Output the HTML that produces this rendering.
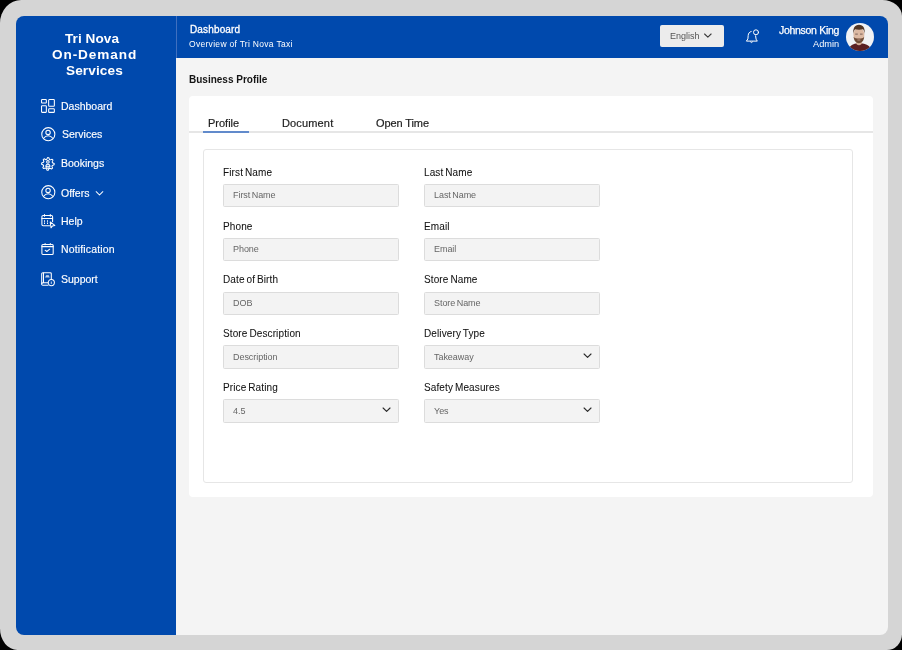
<!DOCTYPE html>
<html><head><meta charset="utf-8">
<style>
*{box-sizing:border-box;margin:0;padding:0}
html,body{width:902px;height:650px;overflow:hidden;background:#000;font-family:"Liberation Sans",sans-serif;position:relative}
div,svg{position:absolute}
.t{white-space:nowrap;line-height:1;will-change:transform}
.frame{left:0;top:0;width:902px;height:650px;background:#d5d5d5;border-radius:21.2px 19.6px 15.2px 17.4px / 23px 16.1px 15.7px 21.5px}
.content{left:176px;top:57px;width:711.8px;height:578.1px;background:#f4f4f4;border-bottom-right-radius:8px}
.side{left:15.9px;top:15.8px;width:160.1px;height:619.3px;background:#0049ad;border-top-left-radius:8px;border-bottom-left-radius:8px}
.head{left:176px;top:15.8px;width:711.8px;height:42.1px;background:#0049ad;border-top-right-radius:8px}
.sep{left:176px;top:15.8px;width:1px;height:42.1px;background:#3f6fbf}
.brand{color:#fff;font-weight:bold;font-size:13.6px}
.nav{color:#fff;font-size:10.5px;-webkit-text-stroke:0.15px #fff}
.lang{left:660px;top:25px;width:64px;height:22px;background:#ececec;border-radius:2px}
.avatar{left:846px;top:23px;width:28px;height:28px;border-radius:50%;overflow:hidden;background:#f1f2f4}
.card{left:189px;top:95.7px;width:684px;height:401.3px;background:#fff;border-radius:4px}
.tabline{left:189px;top:131.3px;width:684px;height:1.3px;background:#e6e6e6}
.tabul{left:203px;top:131px;width:46px;height:2px;background:#618acb}
.box{left:203px;top:149px;width:650px;height:334px;border:1px solid #e6e6e6;border-radius:3px}
.lbl{font-size:10px;letter-spacing:0.12px;word-spacing:-1px;color:#111;-webkit-text-stroke:0.05px #111}
.inp{width:176px;height:23px;background:#f3f3f3;border:1px solid #dcdcdc;border-radius:1.5px}
.ph{font-size:9px;letter-spacing:-0.05px;word-spacing:-1px;color:#666}
.tab{font-size:11px;color:#1e1e1e;-webkit-text-stroke:0.2px #1e1e1e}
</style></head><body>
<div class="frame"></div>
<div class="content"></div>
<div class="side"></div>
<div class="head"></div>
<div class="sep"></div>
<div class="t brand" style="top:31.79px;left:64.6px;letter-spacing:0.05px">Tri Nova</div>
<div class="t brand" style="top:48.29px;left:51.5px;letter-spacing:0.9px">On-Demand</div>
<div class="t brand" style="top:64.09px;left:65.6px;letter-spacing:0.12px">Services</div>
<svg width="17" height="16" viewBox="0 0 17 16" style="left:39px;top:98px"><g stroke="#fff" fill="none" stroke-width="1.05" stroke-linecap="round" stroke-linejoin="round" stroke-width="0.95"><rect x="2.55" y="1.55" width="4.8" height="3.5" rx="0.6"/><rect x="2.55" y="7.65" width="4.8" height="6.7" rx="0.6"/><rect x="9.65" y="1.55" width="5.7" height="6.6" rx="0.7"/><rect x="9.65" y="10.75" width="5.7" height="3.6" rx="0.7"/></g></svg>
<div class="t nav" style="left:61px;top:101.11px;">Dashboard</div>
<svg width="17" height="17" viewBox="0 0 17 17" style="left:39.5px;top:126.1px"><g stroke="#fff" fill="none" stroke-width="1.05" stroke-linecap="round" stroke-linejoin="round" stroke-width="0.95"><circle cx="8.3" cy="8.15" r="6.55"/><circle cx="8.05" cy="6.4" r="2.2"/><path d="M3.6 12.2 C5 10.4 6.6 9.7 8.2 9.7 C9.8 9.7 11.4 10.4 12.8 12.2"/></g></svg>
<div class="t nav" style="left:62px;top:129.11px;">Services</div>
<svg width="16" height="16" viewBox="0 0 16 16" style="left:39.7px;top:155.6px"><g stroke="#fff" fill="none" stroke-width="1.05" stroke-linecap="round" stroke-linejoin="round" stroke-width="0.95"><path d="M7.59 1.61 L8.82 1.67 L9.48 3.47 L10.32 3.87 L12.13 3.23 L12.96 4.15 L12.15 5.89 L12.46 6.76 L14.19 7.59 L14.13 8.82 L12.33 9.48 L11.93 10.32 L12.57 12.13 L11.65 12.96 L9.91 12.15 L9.04 12.46 L8.21 14.19 L6.98 14.13 L6.32 12.33 L5.48 11.93 L3.67 12.57 L2.84 11.65 L3.65 9.91 L3.34 9.04 L1.61 8.21 L1.67 6.98 L3.47 6.32 L3.87 5.48 L3.23 3.67 L4.15 2.84 L5.89 3.65 L6.76 3.34 Z"/><circle cx="7.9" cy="5.9" r="1.3"/><path d="M5.7 10.2 C6 8.9 6.8 8.3 7.9 8.3 C9 8.3 9.8 8.9 10.1 10.2 Z M6.5 10.2 L7 12.3 H8.8 L9.3 10.2"/></g></svg>
<div class="t nav" style="left:61px;top:158.41px;">Bookings</div>
<svg width="17" height="17" viewBox="0 0 17 17" style="left:39.5px;top:184.2px"><g stroke="#fff" fill="none" stroke-width="1.05" stroke-linecap="round" stroke-linejoin="round" stroke-width="0.95"><circle cx="8.3" cy="8.15" r="6.55"/><circle cx="8.05" cy="6.4" r="2.2"/><path d="M3.6 12.2 C5 10.4 6.6 9.7 8.2 9.7 C9.8 9.7 11.4 10.4 12.8 12.2"/></g></svg>
<div class="t nav" style="left:61.3px;top:187.71px;">Offers</div>
<svg width="16" height="16" viewBox="0 0 16 16" style="left:40px;top:213px"><g stroke="#fff" fill="none" stroke-width="1.05" stroke-linecap="round" stroke-linejoin="round"><path d="M9.6 12.7 H3.1 a1.2 1.2 0 0 1 -1.2 -1.2 V3.7 a1.2 1.2 0 0 1 1.2 -1.2 H11.4 a1.2 1.2 0 0 1 1.2 1.2 V8.6"/><path d="M1.9 5.4 H12.6"/><path d="M4.5 1.5 V3.3 M10.3 1.5 V3.3"/><path d="M4.5 7.7 V8.4 M4.5 9.9 V10.6 M7.5 7.7 V8.4 M7.5 9.9 V10.6" stroke-width="1"/><path d="M10.2 8.9 L14.8 12.4 L12.5 12.9 L11 14.8 Z"/></g></svg>
<div class="t nav" style="left:61px;top:215.51px;">Help</div>
<svg width="16" height="15" viewBox="0 0 16 15" style="left:40px;top:242px"><g stroke="#fff" fill="none" stroke-width="1.05" stroke-linecap="round" stroke-linejoin="round" stroke-width="1"><rect x="1.9" y="2.5" width="11.3" height="9.9" rx="1"/><path d="M1.9 4.6 H13.2"/><path d="M5.1 1.6 V2.8 M10.3 1.6 V2.8"/><path d="M5.1 8.2 L6.8 9.5 L9.7 7.2"/></g></svg>
<div class="t nav" style="left:61px;top:244.11px; letter-spacing:0.15px">Notification</div>
<svg width="16" height="16" viewBox="0 0 16 16" style="left:40px;top:271px"><g stroke="#fff" fill="none" stroke-width="1.05" stroke-linecap="round" stroke-linejoin="round" stroke-width="1"><path d="M11.3 8.3 V2.7 a1 1 0 0 0 -1 -1 H2.8 a1.1 1.1 0 0 0 -1.1 1.1 V13.2 a1.1 1.1 0 0 0 1.1 1.1 H8"/><path d="M3.5 1.9 V11.6"/><path d="M1.8 12.7 a1.1 1.1 0 0 1 1.1 -0.9 H8.1"/><path d="M5.6 6.1 L6.3 4.3 H8.5 L9.2 6.1 Z" fill="#fff" stroke-width="0.5" opacity="0.75"/><circle cx="11.3" cy="11.6" r="3.1"/><path d="M11.3 10.9 V12.5" stroke-width="0.8"/></g></svg>
<div class="t nav" style="left:61px;top:273.91px;">Support</div>
<svg width="10" height="7" viewBox="0 0 10 7" style="left:95px;top:190px"><path d="M1.2 1.7 L4.5 5 L7.8 1.7" stroke="#fff" fill="none" stroke-width="1.05" stroke-linecap="round" stroke-linejoin="round"/></svg>
<div class="t" style="left:189.7px;top:24.83px;font-size:10px;letter-spacing:0.15px;color:#fff;-webkit-text-stroke:0.3px #fff">Dashboard</div>
<div class="t" style="left:189px;top:39.7px;font-size:8.5px;color:#fff;letter-spacing:0.3px">Overview of Tri Nova Taxi</div>
<div class="lang"></div>
<div class="t" style="left:670px;top:31.68px;font-size:9px;color:#555">English</div>
<svg width="12" height="8" viewBox="0 0 12 8" style="left:703.2px;top:32.4px"><path d="M1.6 2 L4.85 5.1 L8.1 2" fill="none" stroke="#3a3a3a" stroke-width="1.1" stroke-linecap="round" stroke-linejoin="round"/></svg>
<svg width="16" height="17" viewBox="0 0 16 17" style="left:744px;top:28px"><g stroke="#fff" fill="none" stroke-width="1" stroke-linecap="round" stroke-linejoin="round"><path d="M7.2 3.5 C5.3 3.9 4.4 5.4 4.2 7.4 L3.9 10.9 L2.4 13.1 H13.3 L12.1 11.2 L11.6 7.9"/><path d="M6.5 14 Q7.5 15.5 8.5 14"/><circle cx="12" cy="4.3" r="2.5"/></g></svg>
<div class="t" style="right:62.5px;top:24.51px;font-size:10.5px;letter-spacing:-0.3px;color:#fff;-webkit-text-stroke:0.25px #fff">Johnson King</div>
<div class="t" style="right:63.1px;top:40.11px;font-size:9.2px;color:#fff">Admin</div>
<div class="avatar"><svg width="28" height="28" viewBox="0 0 28 28" style="left:0;top:0">
<path d="M2.5 26 C4.5 22 8 20.6 11 20.2 L13 22.5 L15 20.2 C19 20.6 23 22 25.5 26 L25.5 28 L2.5 28 Z" fill="#5a1f22"/>
<path d="M10.2 16 L10.2 20.5 C11 22.6 14.8 22.6 15.8 20.5 L15.8 16 Z" fill="#d4ad95"/>
<ellipse cx="12.9" cy="11.8" rx="5.5" ry="7.3" fill="#dcb9a3"/>
<path d="M7.3 11 C6.8 5.5 8.6 2 13 1.8 C17.4 2 19.3 5.5 18.6 11 C18.4 8.6 17.8 6.8 16.8 6.3 C15 6.9 11.2 6.9 9.2 6.3 C8.2 7 7.6 8.6 7.3 11 Z" fill="#523625"/>
<path d="M7.6 13.8 C8 18.2 10.2 20.2 12.9 20.2 C15.6 20.2 17.8 18.2 18.2 13.8 C17.2 15.4 15.4 15.6 12.9 15.6 C10.4 15.6 8.6 15.4 7.6 13.8 Z" fill="#6e4c38"/>
<rect x="9.2" y="10.6" width="2.6" height="1" fill="#7a625a"/><rect x="14" y="10.6" width="2.6" height="1" fill="#7a625a"/>
<path d="M11.4 17 H14.4" stroke="#c29a8c" stroke-width="0.9"/>
</svg></div>
<div class="t" style="left:188.6px;top:74.63px;font-size:10px;font-weight:bold;color:#151515">Business Profile</div>
<div class="card"></div>
<div class="t tab" style="left:208.2px;top:117.59px">Profile</div>
<div class="t tab" style="left:281.7px;top:117.59px;letter-spacing:0.15px">Document</div>
<div class="t tab" style="left:375.7px;top:117.59px;letter-spacing:-0.1px">Open Time</div>
<div class="tabline"></div>
<div class="tabul"></div>
<div class="box"></div>
<div class="t lbl" style="left:223px;top:167.84px">First Name</div>
<div class="inp" style="left:223.2px;top:184.10px;height:22.50px"></div>
<div class="t ph" style="left:233px;top:191.28px">First Name</div>
<div class="t lbl" style="left:424px;top:167.84px">Last Name</div>
<div class="inp" style="left:424.2px;top:184.10px;height:22.50px"></div>
<div class="t ph" style="left:434px;top:191.28px">Last Name</div>
<div class="t lbl" style="left:223px;top:221.59px">Phone</div>
<div class="inp" style="left:223.2px;top:237.85px;height:22.80px"></div>
<div class="t ph" style="left:233px;top:245.13px">Phone</div>
<div class="t lbl" style="left:424px;top:221.59px">Email</div>
<div class="inp" style="left:424.2px;top:237.85px;height:22.80px"></div>
<div class="t ph" style="left:434px;top:245.13px">Email</div>
<div class="t lbl" style="left:223px;top:275.34px">Date of Birth</div>
<div class="inp" style="left:223.2px;top:291.60px;height:23.10px"></div>
<div class="t ph" style="left:233px;top:298.98px">DOB</div>
<div class="t lbl" style="left:424px;top:275.34px">Store Name</div>
<div class="inp" style="left:424.2px;top:291.60px;height:23.10px"></div>
<div class="t ph" style="left:434px;top:298.98px">Store Name</div>
<div class="t lbl" style="left:223px;top:329.09px">Store Description</div>
<div class="inp" style="left:223.2px;top:345.35px;height:23.40px"></div>
<div class="t ph" style="left:233px;top:352.83px">Description</div>
<div class="t lbl" style="left:424px;top:329.09px">Delivery Type</div>
<div class="inp" style="left:424.2px;top:345.35px;height:23.40px"></div>
<div class="t ph" style="left:434px;top:352.83px">Takeaway</div>
<svg width="12" height="8" viewBox="0 0 12 8" style="left:581.8px;top:352.29999999999995px"><path d="M2.1 2 L5.55 5.35 L9 2" fill="none" stroke="#2a2a2a" stroke-width="1.15" stroke-linecap="round" stroke-linejoin="round"/></svg>
<div class="t lbl" style="left:223px;top:382.84px">Price Rating</div>
<div class="inp" style="left:223.2px;top:399.10px;height:23.70px"></div>
<div class="t ph" style="left:233px;top:406.68px">4.5</div>
<svg width="12" height="8" viewBox="0 0 12 8" style="left:381.3px;top:406.1px"><path d="M2.1 2 L5.55 5.35 L9 2" fill="none" stroke="#2a2a2a" stroke-width="1.15" stroke-linecap="round" stroke-linejoin="round"/></svg>
<div class="t lbl" style="left:424px;top:382.84px">Safety Measures</div>
<div class="inp" style="left:424.2px;top:399.10px;height:23.70px"></div>
<div class="t ph" style="left:434px;top:406.68px">Yes</div>
<svg width="12" height="8" viewBox="0 0 12 8" style="left:581.8px;top:406.1px"><path d="M2.1 2 L5.55 5.35 L9 2" fill="none" stroke="#2a2a2a" stroke-width="1.15" stroke-linecap="round" stroke-linejoin="round"/></svg>
</body></html>
